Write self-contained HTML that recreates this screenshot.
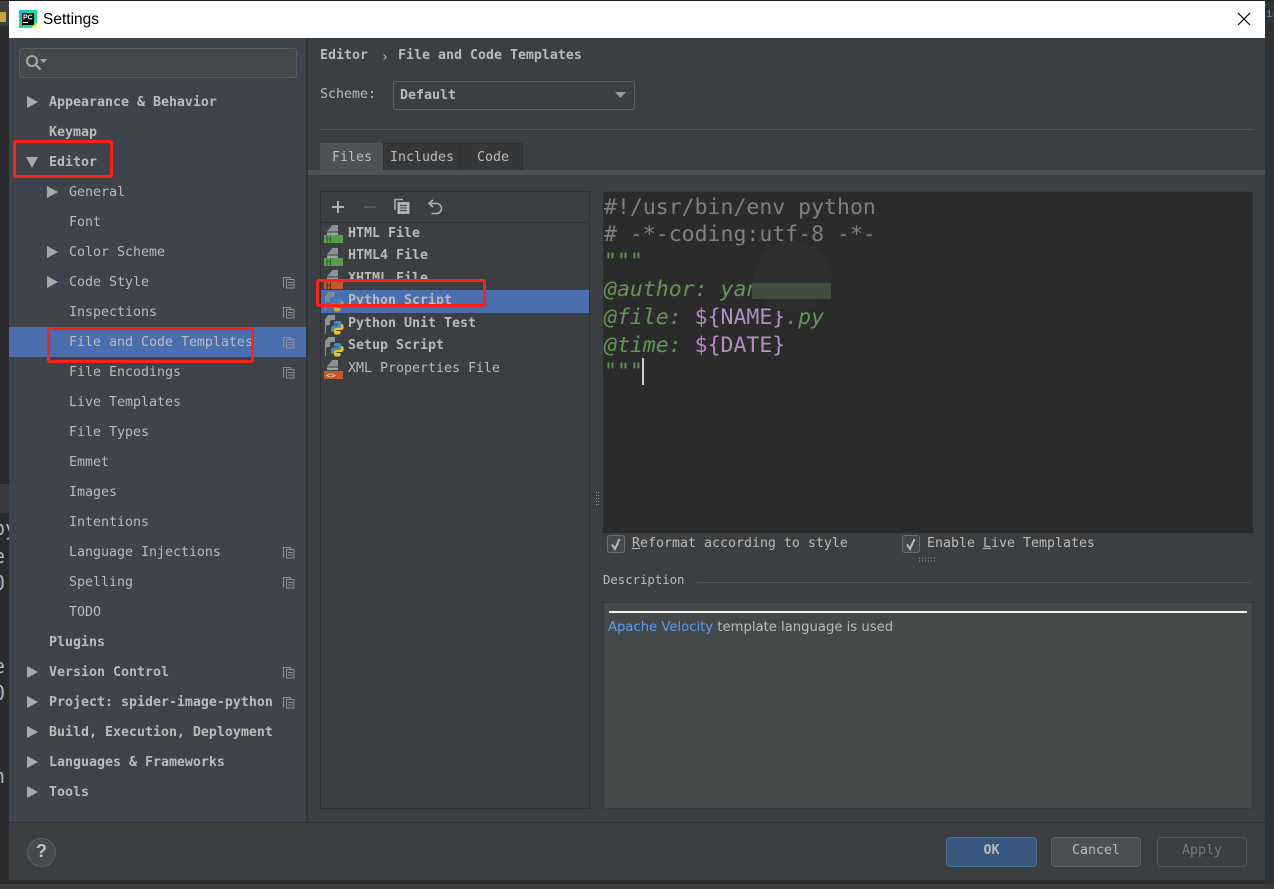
<!DOCTYPE html>
<html><head><meta charset="utf-8"><style>
html,body{margin:0;padding:0;width:1274px;height:889px;overflow:hidden;background:#2b2b2b}
*{box-sizing:border-box}
.a{position:absolute}
.t{position:absolute;margin-top:2px;font-family:"DejaVu Sans Mono","Liberation Mono",monospace;font-size:13.29px;line-height:16px;color:#bbbbbb;white-space:pre}
.b{font-weight:bold}
.red{position:absolute;border:3px solid #ff2216;border-radius:3px;z-index:9}
.e{position:absolute;left:604px;font-family:"DejaVu Sans Mono","Liberation Mono",monospace;font-size:21.5px;line-height:28px;white-space:pre;color:#808080}
.g{color:#629755;font-style:italic}
.v{color:#b48ec4}
svg{position:absolute;display:block}
</style></head><body>
<!-- background IDE -->
<div class="a" style="left:0;top:0;width:9px;height:889px;background:#2b2b2b"></div>
<div class="a" style="left:0;top:484px;width:9px;height:29px;background:#3a3a3a"></div>
<div class="a" style="left:0;top:0;width:9px;height:26px;background:#3c3f41"></div>
<div class="a" style="left:0;top:12px;width:6px;height:10px;background:#c9a63a"></div>
<div class="a" style="left:1265px;top:0;width:9px;height:889px;background:#2f3133"></div>
<div class="t" style="left:1266px;top:4px;font-size:11px;color:#6a8fb5">in</div>
<div class="a" style="left:0;top:884px;width:1274px;height:5px;background:#3a3c3e"></div>
<div class="a" style="left:0;top:0;width:1274px;height:1px;background:#222"></div>
<div class="t" style="left:-7px;top:513px;font-size:20px;line-height:27.5px;color:#a9b7c6">py
e
0


e
0


n</div>
<!-- window -->
<div class="a" style="left:9px;top:1px;width:1256px;height:879px;background:#3c3f41"></div>
<div class="a" style="left:9px;top:1px;width:1256px;height:37px;background:#fff"></div>
<svg style="left:19px;top:10px" width="18" height="18" viewBox="0 0 18 18"><rect width="18" height="18" fill="#21d789"/><path d="M0 9V0h9z" fill="#07c3f2"/><path d="M18 0v12l-6 6h6z" fill="#fcf84a"/><rect x="3" y="3" width="12" height="12" fill="#000"/><text x="4" y="9.500" font-family="Liberation Sans,sans-serif" font-size="7" font-weight="bold" fill="#fff">PC</text><rect x="4" y="12" width="5" height="1" fill="#fff"/></svg>
<div class="t" style="left:43px;top:8px;font-family:'Liberation Sans','Noto Sans CJK SC',sans-serif;font-size:15.5px;line-height:20px;color:#000">Settings</div>
<svg style="left:1237px;top:12px" width="14" height="14" viewBox="0 0 14 14"><path d="M1 1L13 13M13 1L1 13" stroke="#000" stroke-width="1.2" fill="none"/></svg>

<!-- sidebar -->
<div class="a" style="left:9px;top:38px;width:297px;height:785px;background:#3e434c"></div>
<div class="a" style="left:306px;top:38px;width:2px;height:785px;background:#333537"></div>
<div class="a" style="left:19px;top:48px;width:278px;height:30px;background:#45494a;border:1px solid #5a5d5f;border-radius:3px"></div>
<svg style="left:25px;top:54px" width="24" height="18" viewBox="0 0 24 18"><circle cx="7" cy="7" r="5" fill="none" stroke="#a5a8aa" stroke-width="2"/><path d="M10.500 10.500L15.500 15.500" stroke="#a5a8aa" stroke-width="2.200"/><path d="M15 5h7l-3.500 4z" fill="#a5a8aa"/></svg>
<div class="a" style="left:9px;top:327px;width:297px;height:30px;background:#4b6eaf"></div>

<svg style="left:0;top:0" width="310" height="810"><g fill="#a9a9a9">
<path d="M27 96l11 6-11 6z"/><path d="M47 186l11 6-11 6z"/><path d="M47 246l11 6-11 6z"/><path d="M47 276l11 6-11 6z"/>
<path d="M26 157h12l-6 11z"/>
<path d="M27 666l11 6-11 6z"/><path d="M27 696l11 6-11 6z"/><path d="M27 726l11 6-11 6z"/><path d="M27 756l11 6-11 6z"/><path d="M27 786l11 6-11 6z"/>
</g>
<g fill="none" stroke="#8d9093" stroke-width="1">
<g id="c"><path d="M283.500 287.500v-10h7v2"/><rect x="286.500" y="279.500" width="7.500" height="8.500"/><path d="M288 282.500h5M288 285h5"/></g>
<use href="#c" y="30"/><use href="#c" y="60"/><use href="#c" y="90"/><use href="#c" y="270"/><use href="#c" y="300"/><use href="#c" y="390"/><use href="#c" y="420"/>
</g></svg>

<div class="t b" style="left:49px;top:93px">Appearance &amp; Behavior</div>
<div class="t b" style="left:49px;top:123px">Keymap</div>
<div class="t b" style="left:49px;top:153px">Editor</div>
<div class="t" style="left:69px;top:183px">General</div>
<div class="t" style="left:69px;top:213px">Font</div>
<div class="t" style="left:69px;top:243px">Color Scheme</div>
<div class="t" style="left:69px;top:273px">Code Style</div>
<div class="t" style="left:69px;top:303px">Inspections</div>
<div class="t" style="left:69px;top:333px">File and Code Templates</div>
<div class="t" style="left:69px;top:363px">File Encodings</div>
<div class="t" style="left:69px;top:393px">Live Templates</div>
<div class="t" style="left:69px;top:423px">File Types</div>
<div class="t" style="left:69px;top:453px">Emmet</div>
<div class="t" style="left:69px;top:483px">Images</div>
<div class="t" style="left:69px;top:513px">Intentions</div>
<div class="t" style="left:69px;top:543px">Language Injections</div>
<div class="t" style="left:69px;top:573px">Spelling</div>
<div class="t" style="left:69px;top:603px">TODO</div>
<div class="t b" style="left:49px;top:633px">Plugins</div>
<div class="t b" style="left:49px;top:663px">Version Control</div>
<div class="t b" style="left:49px;top:693px">Project: spider-image-python</div>
<div class="t b" style="left:49px;top:723px">Build, Execution, Deployment</div>
<div class="t b" style="left:49px;top:753px">Languages &amp; Frameworks</div>
<div class="t b" style="left:49px;top:783px">Tools</div>

<!-- header -->
<div class="t b" style="left:320px;top:46px">Editor</div>
<div class="t" style="left:381px;top:48px;font-size:13px">›</div>
<div class="t b" style="left:398px;top:46px">File and Code Templates</div>
<div class="t" style="left:320px;top:85px">Scheme:</div>
<div class="a" style="left:393px;top:81px;width:242px;height:29px;background:#3c3f41;border:1px solid #5f6264;border-radius:3px"></div>
<div class="t b" style="left:400px;top:86px">Default</div>
<svg style="left:615px;top:92px" width="12" height="8"><path d="M0 0h11l-5.500 6z" fill="#999"/></svg>
<div class="a" style="left:320px;top:129px;width:933px;height:1px;background:#515456"></div>

<!-- tabs -->
<div class="a" style="left:320px;top:143px;width:203px;height:27px;background:#363739;border:1px solid #2f3032;border-bottom:0"></div>
<div class="a" style="left:320px;top:143px;width:63px;height:27px;background:#4e5254"></div>
<div class="a" style="left:383px;top:143px;width:1px;height:27px;background:#2f3032"></div>
<div class="a" style="left:460px;top:143px;width:1px;height:27px;background:#2f3032"></div>
<div class="a" style="left:308px;top:170px;width:957px;height:5px;background:#4e5254"></div>
<div class="t" style="left:332px;top:148px">Files</div>
<div class="t" style="left:390px;top:148px">Includes</div>
<div class="t" style="left:477px;top:148px">Code</div>

<!-- file list -->
<div class="a" style="left:320px;top:191px;width:270px;height:618px;background:#3c3f41;border:1px solid #2f3133"></div>
<div class="a" style="left:321px;top:222px;width:268px;height:1px;background:#2f3133"></div>
<svg style="left:325px;top:195px" width="125" height="24" viewBox="0 0 125 24"><path d="M7 12h12M13 6v12" stroke="#aeb0b2" stroke-width="2" fill="none"/><path d="M39 12h12" stroke="#55585a" stroke-width="2"/><path d="M70 15V4.500h8" fill="none" stroke="#aeb0b2" stroke-width="1.500"/><rect x="72.500" y="7" width="12" height="12" fill="#aeb0b2"/><path d="M75 10.500h7M75 13h7M75 15.500h7" stroke="#3c3f41" stroke-width="1"/><path d="M108 5l-4 3.500 4 3.500" fill="none" stroke="#aeb0b2" stroke-width="1.600"/><path d="M104.500 8.500h7a5 5 0 0 1 0 10h-5" fill="none" stroke="#aeb0b2" stroke-width="1.600"/></svg>
<div class="a" style="left:321px;top:290px;width:268px;height:23px;background:#4b6eaf"></div>

<svg style="left:320px;top:222px" width="30" height="165" viewBox="0 0 30 165">
<g id="h"><path d="M7 9.500L12.500 3H18V9.500z" fill="#8f9295"/><rect x="7" y="10.500" width="11" height="2.500" fill="#a0a2a4"/><rect x="4" y="13" width="19" height="8" fill="#5c9a4d"/><text x="6" y="20.500" font-family="DejaVu Sans Mono,monospace" font-size="9" fill="#2d4a28">H</text></g>
<use href="#h" y="23"/>
<path d="M7 54.500L12.500 48H18V54.500z" fill="#8f9295"/><rect x="7" y="55.500" width="11" height="2.500" fill="#a0a2a4"/>
<rect x="4" y="60" width="19" height="7" fill="#c0592b"/><text x="6" y="67" font-family="DejaVu Sans Mono,monospace" font-size="9" fill="#43200f">H</text>
<g transform="translate(0,70)" opacity=".72"><path d="M5 4L8.500 0H15V5H12A2 2 0 0 0 10 7V10H8A2 2 0 0 0 6 12V19H5z" fill="#8f9395"/><path d="M19 6h-3a2 2 0 0 0-2 2v1.500h4v1h-5a2.500 2.500 0 0 0-2 2.500v2a2 2 0 0 0 2 2h1v-2a2 2 0 0 1 2-2h3a2 2 0 0 0 2-2V8a2 2 0 0 0-2-2z" fill="#3f8fc4"/><path d="M15.500 19.500h3a2 2 0 0 0 2-2V16h-4v-1h5a2.500 2.500 0 0 0 2-2.500V11a2 2 0 0 0-2-2h-.5v2a2 2 0 0 1-2 2h-3a2 2 0 0 0-2 2v2.500a2 2 0 0 0 2 2z" fill="#f4c20d"/></g>
<g id="p" transform="translate(0,93)"><path d="M5 4L8.500 0H15V5H12A2 2 0 0 0 10 7V10H8A2 2 0 0 0 6 12V19H5z" fill="#8f9395"/><path d="M19 6h-3a2 2 0 0 0-2 2v1.500h4v1h-5a2.500 2.500 0 0 0-2 2.500v2a2 2 0 0 0 2 2h1v-2a2 2 0 0 1 2-2h3a2 2 0 0 0 2-2V8a2 2 0 0 0-2-2z" fill="#3f8fc4"/><path d="M15.500 19.500h3a2 2 0 0 0 2-2V16h-4v-1h5a2.500 2.500 0 0 0 2-2.500V11a2 2 0 0 0-2-2h-.5v2a2 2 0 0 1-2 2h-3a2 2 0 0 0-2 2v2.500a2 2 0 0 0 2 2z" fill="#f4c20d"/></g>
<g transform="translate(0,115)"><path d="M5 4L8.500 0H15V5H12A2 2 0 0 0 10 7V10H8A2 2 0 0 0 6 12V19H5z" fill="#8f9395"/><path d="M19 6h-3a2 2 0 0 0-2 2v1.500h4v1h-5a2.500 2.500 0 0 0-2 2.500v2a2 2 0 0 0 2 2h1v-2a2 2 0 0 1 2-2h3a2 2 0 0 0 2-2V8a2 2 0 0 0-2-2z" fill="#3f8fc4"/><path d="M15.500 19.500h3a2 2 0 0 0 2-2V16h-4v-1h5a2.500 2.500 0 0 0 2-2.500V11a2 2 0 0 0-2-2h-.5v2a2 2 0 0 1-2 2h-3a2 2 0 0 0-2 2v2.500a2 2 0 0 0 2 2z" fill="#f4c20d"/></g>
<path d="M7 144.500L12.500 138H18V144.500z" fill="#8f9295"/><rect x="7" y="145.500" width="11" height="2.500" fill="#a0a2a4"/>
<rect x="4" y="149" width="19" height="8" fill="#c0592b"/><text x="6" y="156" font-family="DejaVu Sans Mono,monospace" font-size="8" fill="#eedfd5">&lt;&gt;</text>
</svg>
<div class="t b" style="left:348px;top:224px">HTML File</div>
<div class="t b" style="left:348px;top:246px">HTML4 File</div>
<div class="t b" style="left:348px;top:269px;height:11px;overflow:hidden">XHTML File</div>
<div class="t b" style="left:348px;top:291px">Python Script</div>
<div class="t b" style="left:348px;top:314px">Python Unit Test</div>
<div class="t b" style="left:348px;top:336px">Setup Script</div>
<div class="t" style="left:348px;top:359px">XML Properties File</div>

<!-- splitter -->
<svg style="left:595px;top:491px" width="6" height="18"><g fill="#8a8c8e"><rect x="1" y="1" width="1" height="1"/><rect x="3" y="1" width="1" height="1"/><rect x="1" y="4" width="1" height="1"/><rect x="3" y="4" width="1" height="1"/><rect x="1" y="7" width="1" height="1"/><rect x="3" y="7" width="1" height="1"/><rect x="1" y="10" width="1" height="1"/><rect x="3" y="10" width="1" height="1"/><rect x="1" y="13" width="1" height="1"/><rect x="3" y="13" width="1" height="1"/></g></svg>

<!-- editor -->
<div class="a" style="left:603px;top:191px;width:650px;height:342px;background:#2b2b2b;border-top:1px solid #36393b"></div>
<div class="a" style="left:754px;top:240px;width:78px;height:74px;border-radius:50%;background:#2e2e2e"></div>
<div class="e" style="top:194px">#!/usr/bin/env python</div>
<div class="e" style="top:221px"># -*-coding:utf-8 -*-</div>
<div class="e g" style="top:248px">"""</div>
<div class="e g" style="top:276px">@author: yan</div>
<div class="e" style="top:304px"><span class="g">@file:</span> <span class="v">${NAME}</span><span class="g">.py</span></div>
<div class="e" style="top:332px"><span class="g">@time:</span> <span class="v">${DATE}</span></div>
<div class="e g" style="top:358px">"""</div>
<div class="a" style="left:752px;top:283px;width:79px;height:16px;background:#3f4e3b"></div>
<div class="a" style="left:772px;top:299px;width:34px;height:12px;background:#2e2e2e"></div>
<div class="a" style="left:642px;top:358px;width:2px;height:27px;background:#d0d0d0"></div>

<!-- checkboxes -->
<div class="a" style="left:607px;top:535px;width:18px;height:18px;background:#45494b;border:1px solid #6b6e70;border-radius:3px"></div>
<div class="a" style="left:902px;top:535px;width:18px;height:18px;background:#45494b;border:1px solid #6b6e70;border-radius:3px"></div>
<svg style="left:607px;top:535px" width="18" height="18"><path d="M5 9.500l3 4.500 4.500-10" fill="none" stroke="#bdbdbd" stroke-width="2"/></svg>
<svg style="left:902px;top:535px" width="18" height="18"><path d="M5 9.500l3 4.500 4.500-10" fill="none" stroke="#bdbdbd" stroke-width="2"/></svg>
<div class="t" style="left:632px;top:534px"><u>R</u>eformat according to style</div>
<div class="t" style="left:927px;top:534px">Enable <u>L</u>ive Templates</div>
<svg style="left:918px;top:557px" width="18" height="6"><path d="M1 1h16M1 4h16" stroke="#9a9c9e" stroke-dasharray="1 2" stroke-width="1"/></svg>

<!-- description -->
<div class="t" style="margin-top:0;left:603px;top:572px;font-size:12.3px">Description</div>
<div class="a" style="left:697px;top:582px;width:553px;height:1px;background:#515456"></div>
<div class="a" style="left:603px;top:602px;width:650px;height:207px;background:#45494a;border:1px solid #343638"></div>
<div class="a" style="left:609px;top:611px;width:638px;height:2px;background:#f2f2f2"></div>
<div class="t" style="margin-top:0;left:608px;top:620px;font-family:'DejaVu Sans','Liberation Sans',sans-serif;font-size:13.2px"><span style="color:#589df6">Apache Velocity</span> template language is used</div>

<!-- footer -->
<div class="a" style="left:9px;top:822px;width:1256px;height:1px;background:#2f3133"></div>
<div class="a" style="left:27px;top:838px;width:29px;height:29px;border-radius:50%;background:#484b4d;border:1px solid #5d6062"></div>
<div class="t b" style="margin-top:0;left:27px;top:840px;width:29px;text-align:center;font-family:'Liberation Sans',sans-serif;font-size:18px;line-height:22px;color:#c0c0c0">?</div>
<div class="a" style="left:946px;top:837px;width:91px;height:30px;background:#365880;border:1px solid #4c708c;border-radius:4px"></div>
<div class="a" style="left:1051px;top:837px;width:90px;height:30px;background:#4c5052;border:1px solid #5e6163;border-radius:4px"></div>
<div class="a" style="left:1157px;top:837px;width:90px;height:30px;background:#3c3f41;border:1px solid #54575a;border-radius:4px"></div>
<div class="t b" style="left:946px;top:841px;width:91px;text-align:center">OK</div>
<div class="t" style="left:1051px;top:841px;width:90px;text-align:center">Cancel</div>
<div class="t" style="left:1157px;top:841px;width:90px;text-align:center;color:#777">Apply</div>

<!-- annotations -->
<div class="red" style="left:13px;top:140px;width:100px;height:38px"></div>
<div class="red" style="left:47px;top:327px;width:207px;height:36px"></div>
<div class="red" style="left:316px;top:279px;width:170px;height:28px"></div>
</body></html>
